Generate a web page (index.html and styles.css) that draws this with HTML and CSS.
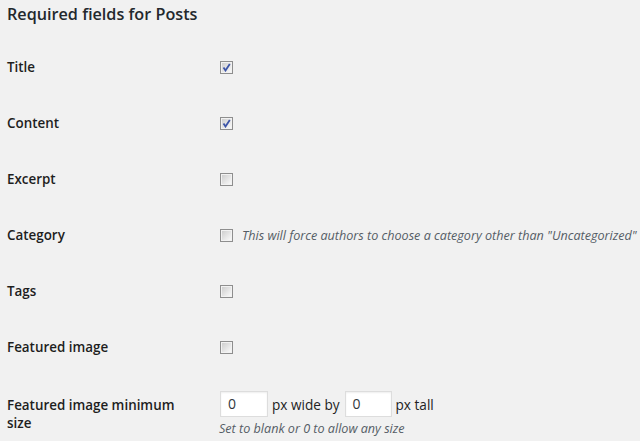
FILE: index.html
```html
<!DOCTYPE html>
<html>
<head>
<meta charset="utf-8">
<link rel="stylesheet" href="styles.css">
</head>
<body>
<h2 class="title">Required fields for Posts</h2>
<div class="form">
  <div class="row">
    <div class="label">Title</div>
    <div class="field"><span class="cb checked"><svg viewBox="0 0 9 9" width="9" height="9"><path d="M1.5 4.5 L3.5 7.5 L7.8 1" fill="none" stroke="#3d55a8" stroke-width="1.8"/></svg></span></div>
  </div>
  <div class="row">
    <div class="label">Content</div>
    <div class="field"><span class="cb checked"><svg viewBox="0 0 9 9" width="9" height="9"><path d="M1.5 4.5 L3.5 7.5 L7.8 1" fill="none" stroke="#3d55a8" stroke-width="1.8"/></svg></span></div>
  </div>
  <div class="row">
    <div class="label">Excerpt</div>
    <div class="field"><span class="cb"></span></div>
  </div>
  <div class="row">
    <div class="label">Category</div>
    <div class="field"><span class="cb"></span><span class="desc inline">This will force authors to choose a category other than "Uncategorized"</span></div>
  </div>
  <div class="row">
    <div class="label">Tags</div>
    <div class="field"><span class="cb"></span></div>
  </div>
  <div class="row">
    <div class="label">Featured image</div>
    <div class="field"><span class="cb"></span></div>
  </div>
  <div class="row last">
    <div class="label">Featured image minimum size</div>
    <div class="field col">
      <div class="sizes"><span class="input">0</span><span class="txt">px wide by</span><span class="input">0</span><span class="txt">px tall</span></div>
      <div class="desc">Set to blank or 0 to allow any size</div>
    </div>
  </div>
</div>
</body>
</html>
```
FILE: styles.css
```css
html, body { margin: 0; padding: 0; background: #f1f1f1; }
body { font-family: "Open Sans", sans-serif; color: #222; overflow: hidden; }
.title { font-size: 16.2px; font-weight: 600; color: #23282d; margin: 0; padding: 3px 0 0 7px; line-height: 22px; }
.form { padding-left: 7px; margin-top: 32px; }
.row { display: flex; align-items: flex-start; height: 56px; }
.label { width: 213px; font-size: 13.4px; font-weight: 600; line-height: 20px; color: #1e1e1e; }
.field { display: flex; align-items: center; height: 20px; white-space: nowrap; }
.cb { width: 11px; height: 11px; border: 1px solid #8e8e8e; box-shadow: inset 0 0 0 1px #f2f2f2; background: linear-gradient(135deg, #cacaca, #f6f6f6 85%); display: inline-flex; align-items: center; justify-content: center; box-sizing: content-box; flex: none; }
.cb svg { display: block; }
.desc { font-size: 12.6px; font-style: italic; color: #555d66; }
.desc.inline { margin-left: 9px; }
.last .label { width: 180px; margin-right: 33px; padding-top: 3px; line-height: 18px; }
.field.col { flex-direction: column; align-items: flex-start; height: auto; }
.sizes { display: flex; align-items: center; margin-top: -2px; }
.input { box-sizing: border-box; width: 48px; height: 26px; background: #fff; border: 1px solid #ddd; box-shadow: inset 0 1px 2px rgba(0,0,0,.07); font-size: 14px; line-height: 24px; padding-left: 7px; color: #32373c; }
.sizes .input + .txt + .input { width: 47px; }
.txt { font-size: 13.6px; margin: 0 5px 0 4px; color: #222; }
.field.col .desc { margin-top: 3px; margin-left: -1px; }
```
